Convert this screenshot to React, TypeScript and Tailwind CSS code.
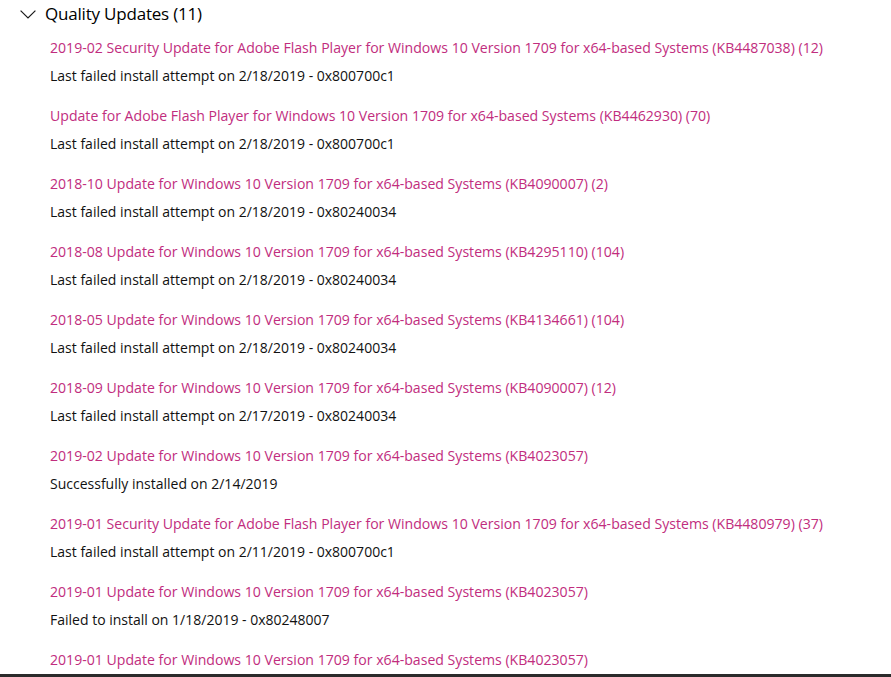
import React from "react";

type Item = { title: string; status?: string };

const items: Item[] = [
  {
    title:
      "2019-02 Security Update for Adobe Flash Player for Windows 10 Version 1709 for x64-based Systems (KB4487038) (12)",
    status: "Last failed install attempt on 2/18/2019 - 0x800700c1",
  },
  {
    title: "Update for Adobe Flash Player for Windows 10 Version 1709 for x64-based Systems (KB4462930) (70)",
    status: "Last failed install attempt on 2/18/2019 - 0x800700c1",
  },
  {
    title: "2018-10 Update for Windows 10 Version 1709 for x64-based Systems (KB4090007) (2)",
    status: "Last failed install attempt on 2/18/2019 - 0x80240034",
  },
  {
    title: "2018-08 Update for Windows 10 Version 1709 for x64-based Systems (KB4295110) (104)",
    status: "Last failed install attempt on 2/18/2019 - 0x80240034",
  },
  {
    title: "2018-05 Update for Windows 10 Version 1709 for x64-based Systems (KB4134661) (104)",
    status: "Last failed install attempt on 2/18/2019 - 0x80240034",
  },
  {
    title: "2018-09 Update for Windows 10 Version 1709 for x64-based Systems (KB4090007) (12)",
    status: "Last failed install attempt on 2/17/2019 - 0x80240034",
  },
  {
    title: "2019-02 Update for Windows 10 Version 1709 for x64-based Systems (KB4023057)",
    status: "Successfully installed on 2/14/2019",
  },
  {
    title:
      "2019-01 Security Update for Adobe Flash Player for Windows 10 Version 1709 for x64-based Systems (KB4480979) (37)",
    status: "Last failed install attempt on 2/11/2019 - 0x800700c1",
  },
  {
    title: "2019-01 Update for Windows 10 Version 1709 for x64-based Systems (KB4023057)",
    status: "Failed to install on 1/18/2019 - 0x80248007",
  },
  {
    title: "2019-01 Update for Windows 10 Version 1709 for x64-based Systems (KB4023057)",
  },
];

export default function App() {
  return (
    <div className="flex h-[677px] w-full flex-col bg-white font-['Open_Sans',sans-serif] text-black">
      <div className="min-h-0 flex-1 overflow-hidden">
        <div className="flex h-[28px] items-center pl-[20px]">
          <svg width="16" height="9" viewBox="0 0 16 9" fill="none" className="mt-[1px] shrink-0">
            <path d="M0.6 0.6 L8 8 L15.4 0.6" stroke="#1a1a1a" strokeWidth="1.2" />
          </svg>
          <span className="ml-[9px] whitespace-nowrap text-[17px] leading-[28px] tracking-[-0.2px]">
            Quality Updates (11)
          </span>
        </div>
        <ul className="mt-[10px] pl-[50px]">
          {items.map((it, i) => (
            <li key={i} className="mb-[20px]">
              <a
                href="#"
                className="block whitespace-nowrap text-[14.1px] leading-[20px] text-[#c12d7e] no-underline"
              >
                {it.title}
              </a>
              {it.status && (
                <div className="mt-[8px] whitespace-nowrap text-[14px] leading-[20px] text-[#111]">
                  {it.status}
                </div>
              )}
            </li>
          ))}
        </ul>
      </div>
      <div className="h-[3px] shrink-0 bg-[#2b2b2b]" />
    </div>
  );
}
